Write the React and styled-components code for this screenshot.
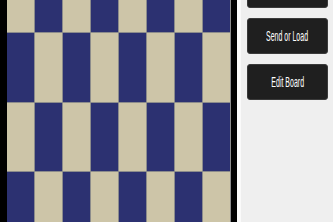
import React from 'react';
import styled, { createGlobalStyle } from 'styled-components';

const Global = createGlobalStyle`
  html, body { margin: 0; padding: 0; overflow: hidden; }
  body { background: #efefef; font-family: "Liberation Sans", Arial, sans-serif; }
`;

const Page = styled.div`
  display: flex;
  width: 333px;
  height: 222px;
  overflow: hidden;
`;

const BoardFrame = styled.div`
  flex: none;
  background: #000;
  padding: 0 6px 0 7px;
  height: 222px;
  overflow: hidden;
`;

const Board = styled.div`
  display: grid;
  grid-template-columns: repeat(8, 28px);
  grid-auto-rows: 69.5px;
  margin-top: -36.5px;
  background: #8c8c8c;
`;

const Square = styled.div`
  background: ${p => (p.$light ? '#cdc5a8' : '#2c3171')};
  border-right: 1px solid #8c8c8c;
  border-bottom: 1px solid #8c8c8c;
`;

const Side = styled.div`
  flex: 1;
  min-width: 0;
  border-left: 4px solid #fafafa;
  background: #efefef;
  padding: 0 0 0 6px;
  display: flex;
  flex-direction: column;
  align-items: flex-start;
  gap: 10px;
`;

const Button = styled.div`
  margin-top: ${p => p.$first ? '-28px' : '0'};
  box-sizing: border-box;
  width: 81px;
  height: 36px;
  background: #1f1f1f;
  border: 1px solid #3a3a3a;
  border-radius: 3px;
  display: flex;
  align-items: center;
  justify-content: center;
  color: #fff;
  font-size: 14px;
  white-space: nowrap;
`;

const Label = styled.span`
  display: inline-block;
  transform: scaleX(0.5);
`;

export default function App() {
  const squares = [];
  for (let r = 0; r < 8; r++) {
    for (let c = 0; c < 8; c++) {
      squares.push(<Square key={r + '-' + c} $light={(r + c) % 2 === 0} />);
    }
  }
  return (
    <Page>
      <Global />
      <BoardFrame>
        <Board>{squares}</Board>
      </BoardFrame>
      <Side>
        <Button $first />
        <Button><Label>Send or Load</Label></Button>
        <Button><Label>Edit Board</Label></Button>
      </Side>
    </Page>
  );
}
